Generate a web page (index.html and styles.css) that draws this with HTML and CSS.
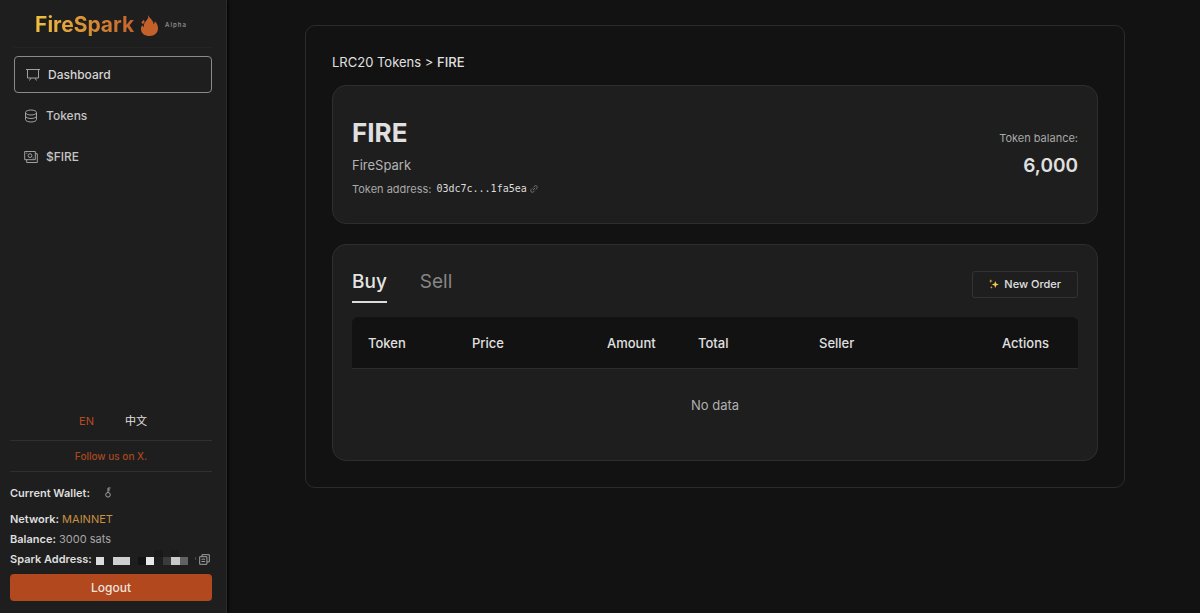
FILE: index.html
```html
<!DOCTYPE html>
<html lang="en">
<head>
<meta charset="utf-8">
<meta name="viewport" content="width=device-width, initial-scale=1">
<title>FireSpark</title>
<link rel="stylesheet" href="styles.css">
</head>
<body>
<div class="app">
  <aside class="sidebar">
    <div class="brand">
      <span class="brand-name">FireSpark</span>
      <svg class="brand-flame" viewBox="0 0 17 21" aria-hidden="true"><path d="M7.800 0C7.500 2 9.500 3.300 11 5.200c1 1.300 1.600 2.500 1.500 4 .8-.6 1.200-1.500 1.300-2.900C15.900 8.300 17 10.700 17 13.300 17 17.900 13.500 21 8.700 21 3.600 21 0 18.100 0 13.900c0-1.600.5-2.700 1.300-3.700.4 1 1 1.600 1.800 1.700-.6-1.700-.2-3 .9-4.600C5.600 5.100 7.600 3.400 7.200 1.500z"/><path d="M2.600 4.800c.9.900 1.200 1.900.7 3C2.800 8.700 2 9 1.200 8.600.4 8.200.3 7.200 1 6.600c.8-.5 1.400-1 1.600-1.800z"/></svg>
      <span class="brand-tag">Alpha</span>
    </div>
    <nav class="nav">
      <a class="nav-item nav-item-active" href="#dashboard">
        <svg class="icon nav-icon" viewBox="0 0 14 14" aria-hidden="true"><path d="M0 1.500h14M1.500 1.500v8.500h11V1.500M5 10l-1.500 2.500M9 10l1.500 2.500"/></svg>
        Dashboard
      </a>
      <a class="nav-item" href="#tokens">
        <svg class="icon nav-icon" viewBox="0 0 14 14" aria-hidden="true"><ellipse cx="7" cy="3.500" rx="5.500" ry="2.500"/><path d="M1.500 3.500v7c0 1.400 2.500 2.500 5.500 2.500s5.500-1.100 5.500-2.500v-7M1.500 7c0 1.400 2.500 2.500 5.500 2.500S12.500 8.400 12.500 7"/></svg>
        Tokens
      </a>
      <a class="nav-item" href="#fire">
        <svg class="icon nav-icon" viewBox="0 0 14 14" aria-hidden="true"><path d="M.7 1.500h10.600v8.200H.7zM11.300 3.700h2v8.800H2.700V9.700"/><circle cx="6" cy="5.600" r="1.900"/><path d="M2.300 3.200h1M8.700 8h1"/></svg>
        $FIRE
      </a>
    </nav>
    <div class="side-foot">
      <div class="langs">
        <button class="lang lang-active" type="button">EN</button>
        <button class="lang" type="button">中文</button>
      </div>
      <div class="follow"><a class="follow-link" href="#x">Follow us on X.</a></div>
      <div class="wallet">
        <div class="wallet-row wallet-current"><strong>Current Wallet:</strong>
          <svg class="icon key-icon" viewBox="0 0 8 12" aria-hidden="true"><circle cx="4" cy="7.800" r="2.300"/><path d="M4 5.500V1h2.500M4 3h2"/></svg>
        </div>
        <div class="wallet-row"><strong>Network:</strong> <span class="network">MAINNET</span></div>
        <div class="wallet-row"><strong>Balance:</strong> <span>3000 sats</span></div>
        <div class="wallet-row address-row"><strong>Spark Address:</strong>
          <svg class="mask" viewBox="0 0 104 18" aria-hidden="true"><path fill="#dcdcdc" d="M4 7h8v8H4z"/><path fill="#cfcfcf" d="M21 7h17v8H21z"/><path fill="#131313" d="M46 7h8v8h-8z"/><path fill="#e8e8e8" d="M54 7h8v8h-8z"/><path fill="#191919" d="M62 0h9v7h-9zM79 0h8v7h-8z"/><path fill="#3b3b3b" d="M71 7h8v8h-8z"/><path fill="#c8c8c8" d="M79 7h9v8h-9z"/><path fill="#626262" d="M88 7h8v8h-8z"/><path fill="#484848" d="M103 7h1v3h-1z"/></svg>
          <button class="copy" type="button" aria-label="Copy address"><svg class="icon copy-icon" viewBox="0 0 11 11" aria-hidden="true"><path d="M.7 2.700h7.200v7.600H.7zM3 2.700V.7h7.300v7.200H7.900M2.500 5.200h3.600M2.500 7.500h3.600"/></svg></button>
        </div>
      </div>
      <button class="logout" type="button">Logout</button>
    </div>
  </aside>

  <main class="main">
    <section class="panel">
      <div class="crumbs"><a class="crumb" href="#tokens">LRC20 Tokens</a> &gt; <span class="crumb-current">FIRE</span></div>
      <div class="card token">
        <div>
          <h1 class="token-title">FIRE</h1>
          <div class="token-name">FireSpark</div>
          <div class="token-address"><span>Token address:</span><code class="hash">03dc7c...1fa5ea</code><svg class="icon link-icon" viewBox="0 0 8 8" aria-hidden="true"><path d="M3.400 2.300 4.500 1.200a1.600 1.600 0 0 1 2.300 2.300L5.700 4.600M4.600 5.700 3.500 6.800a1.600 1.600 0 0 1-2.300-2.300l1.100-1.100M2.900 5.100l2.200-2.200"/></svg></div>
        </div>
        <div class="balance">
          <div class="balance-label">Token balance:</div>
          <div class="balance-value">6,000</div>
        </div>
      </div>
      <div class="card orders">
        <div class="orders-head">
          <div class="tabs" role="tablist">
            <button class="tab tab-active" type="button" role="tab" aria-selected="true">Buy</button>
            <button class="tab" type="button" role="tab" aria-selected="false">Sell</button>
          </div>
          <button class="new-order" type="button">
            <svg class="sparkles" viewBox="0 0 10 10" aria-hidden="true"><path fill="#f4c94f" d="M6.300 2 7.200 4.600 9.800 5.500 7.200 6.400 6.300 9 5.400 6.400 2.800 5.500 5.400 4.600z"/><path fill="#e8a34a" d="M1.800.3l.5 1.300 1.300.5-1.300.5-.5 1.300-.5-1.300L0 2.100l1.300-.5zM2.300 7l.4 1 1 .4-1 .4-.4 1-.4-1-1-.4 1-.4z"/></svg>
            New Order
          </button>
        </div>
        <table class="table">
          <thead>
            <tr>
              <th class="col-token">Token</th>
              <th class="col-price">Price</th>
              <th class="col-amount">Amount</th>
              <th class="col-total">Total</th>
              <th class="col-seller">Seller</th>
              <th class="col-actions">Actions</th>
            </tr>
          </thead>
          <tbody>
            <tr><td class="empty" colspan="6">No data</td></tr>
          </tbody>
        </table>
      </div>
    </section>
  </main>
</div>
</body>
</html>
```

FILE: styles.css
```css
* { box-sizing: border-box; }

body {
  margin: 0;
  background: #121212;
  color: #e0e0e0;
  font-family: Inter, "Noto Sans CJK SC", sans-serif;
  font-size: 13px;
  line-height: 20px;
}

button {
  padding: 0;
  border: 0;
  background: none;
  color: inherit;
  font: inherit;
  cursor: pointer;
}

a { color: inherit; text-decoration: none; }

.icon {
  flex: none;
  fill: none;
  stroke: #a0a0a0;
  stroke-width: 1;
}

.app { display: flex; min-height: 100vh; }

/* Sidebar */
.sidebar {
  display: flex;
  flex: none;
  flex-direction: column;
  width: 227px;
  border-right: 1px solid #2c2c2c;
  background: #1e1e1e;
  box-shadow: 1px 0 3px #000;
}

.brand {
  display: flex;
  align-items: center;
  justify-content: center;
  gap: 7px;
  height: 48px;
  margin: 0 14px;
  padding: 3px 4px 0 0;
  border-bottom: 1px solid #242424;
}

.brand-name {
  background: linear-gradient(90deg, #f0c040, #c4622c);
  background-clip: text;
  color: transparent;
  font-size: 21px;
  font-weight: 700;
  line-height: 28px;
}

.brand-flame { width: 17px; height: 21px; fill: #c4602a; }

.brand-tag { color: #8c8c8c; font-size: 6px; font-weight: 600; letter-spacing: 1px; }

.nav { display: grid; gap: 4px; padding: 8px 14px; }

.nav-item {
  display: flex;
  align-items: center;
  gap: 8px;
  height: 37px;
  padding: 0 10px;
  color: #c4c4c4;
  font-size: 12px;
  font-weight: 500;
}

.nav-item-active {
  padding: 0 11px;
  border: 1px solid #8a8a8a;
  border-radius: 4px;
  color: #d4d4d4;
}

.nav-icon { width: 14px; height: 14px; }

.side-foot { margin-top: auto; padding: 0 14px 12px 10px; font-size: 11px; }

.langs { display: flex; justify-content: center; gap: 31px; padding: 0 0 9px 4px; }

.lang-active { color: #b84c20; }

.follow {
  padding: 5px 0;
  border: solid #2f2f2f;
  border-width: 1px 0;
  color: #a8481f;
  font-size: 10px;
  font-weight: 500;
  text-align: center;
}

.wallet { padding: 11px 0 5px; color: #a6a6a6; }

.wallet-row strong { color: #dedede; font-weight: 600; }

.wallet-current { display: flex; align-items: center; gap: 14px; margin-bottom: 6px; }

.network { color: #c89140; }

.address-row { display: flex; align-items: center; }

.key-icon { width: 8px; height: 12px; }

.mask { flex: none; width: 104px; height: 18px; }

.copy { display: flex; margin-left: auto; padding-right: 2px; }

.copy-icon { width: 11px; height: 11px; }

.logout {
  display: block;
  width: 100%;
  height: 27px;
  border-radius: 4px;
  background: #b1481e;
  color: #f0e4de;
  font-size: 12px;
  font-weight: 500;
}

/* Main */
.main { flex: 1; min-width: 0; padding: 25px 24px 24px 27px; }

.panel {
  max-width: 820px;
  margin: 0 auto;
  padding: 26px;
  border: 1px solid #2b2b2b;
  border-radius: 10px;
}

.crumbs { margin-bottom: 13px; }

.crumb-current { font-weight: 500; }

.card {
  padding: 20px 19px 21px;
  border: 1px solid #2e2e2e;
  border-radius: 14px;
  background: #1e1e1e;
}

.token {
  display: flex;
  align-items: center;
  justify-content: space-between;
  margin-bottom: 20px;
  padding: 29px 19px 24px;
}

.token-title { margin: 0 0 4px; font-size: 26px; font-weight: 700; line-height: 36px; }

.token-name { margin-bottom: 4px; color: #b4b4b4; }

.token-address { display: flex; align-items: center; color: #a8a8a8; font-size: 11px; }

.hash {
  margin: 0 3px 0 5px;
  color: #dcdcdc;
  font-family: "DejaVu Sans Mono", monospace;
  font-size: 10px;
}

.link-icon { width: 8px; height: 8px; stroke: #777; }

.balance { padding-bottom: 6px; text-align: right; }

.balance-label { margin-bottom: 4px; color: #a8a8a8; font-size: 11px; }

.balance-value { font-size: 19px; font-weight: 600; line-height: 28px; }

.orders-head {
  display: flex;
  align-items: center;
  justify-content: space-between;
  margin-bottom: 14px;
}

.tabs { display: flex; gap: 33px; }

.tab {
  height: 38px;
  padding-bottom: 3px;
  border-bottom: 2px solid transparent;
  color: #858585;
  font-size: 19px;
  line-height: 28px;
}

.tab-active { border-color: #dcdcdc; color: #e4e4e4; font-weight: 500; }

.new-order {
  display: flex;
  align-items: center;
  gap: 5px;
  height: 27px;
  padding: 0 16px;
  border: 1px solid #333;
  border-radius: 3px;
  font-size: 11px;
  font-weight: 500;
}

.sparkles { width: 10px; height: 10px; }

.table { width: 100%; border-spacing: 0; table-layout: fixed; }

.table th {
  height: 52px;
  padding: 0 16px;
  border-bottom: 1px solid #2c2c2c;
  background: #121212;
  font-weight: 500;
  text-align: left;
}

.table th:first-child { border-top-left-radius: 6px; }
.table th:last-child { border-top-right-radius: 6px; }

.col-token { width: 104px; }
.col-price { width: 135px; }
.col-amount { width: 91px; }
.col-total { width: 121px; }
.col-seller { width: 183px; }
.col-actions { width: 92px; }

.empty { padding: 26px 16px 24px; color: #b0b0b0; text-align: center; }
```
